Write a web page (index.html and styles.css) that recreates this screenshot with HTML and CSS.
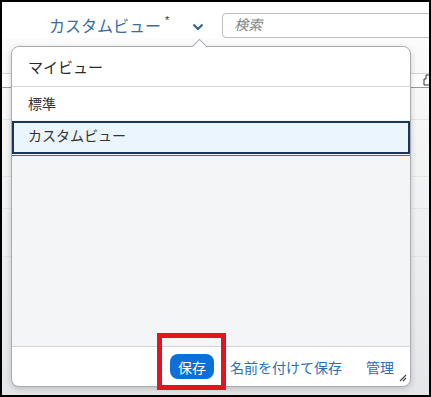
FILE: index.html
```html
<!DOCTYPE html>
<html>
<head>
  <title>カスタムビュー</title>
  <link rel="stylesheet" href="styles.css">
</head>
<body>

  <div class="frame">

    <div class="toolbar">
      <span class="view-title">カスタムビュー<sup>*</sup></span>
      <svg class="chevron" width="12" height="8" viewBox="0 0 12 8">
        <path d="M1.5 1.5 L6 6 L10.5 1.5" fill="none" stroke="#2f5d8c" stroke-width="2"/>
      </svg>
      <div class="search">検索</div>
    </div>

    <div class="content">
      <div class="content-tools">
        <svg class="tool-icon" width="10" height="12" viewBox="0 0 10 12">
          <path d="M1 5 H3 V1 H7 V5 H9 V11 H1 Z" fill="none" stroke="#333" stroke-width="1"/>
        </svg>
      </div>
      <div class="row row-a"></div>
      <div class="row row-b"></div>
      <div class="row row-c"></div>
      <div class="row row-d"></div>
    </div>

    <div class="popover">
      <div class="pop-header">マイビュー</div>
      <div class="pop-list">
        <div class="pop-item">標準</div>
        <div class="pop-item selected">カスタムビュー</div>
      </div>
      <div class="pop-footer">
        <button class="btn-save">保存</button>
        <span class="link">名前を付けて保存</span>
        <span class="link">管理</span>
      </div>
      <svg class="grip" width="8" height="8" viewBox="0 0 8 8">
        <path d="M1 7 L7 1 M4 7 L7 4" stroke="#444" stroke-width="1.1"/>
      </svg>
    </div>

    <div class="highlight"></div>

  </div>

</body>
</html>
```

FILE: styles.css
```css
body {
  margin: 0;
  font-family: "Liberation Sans", "Noto Sans CJK JP", sans-serif;
}
.frame {
  position: relative;
  box-sizing: border-box;
  width: 431px;
  height: 397px;
  border: 2px solid #000;
  background: #fff;
  overflow: hidden;
}

/* top bar */
.toolbar {
  display: flex;
  align-items: center;
  height: 25px;
  padding-top: 11px;
}
.view-title {
  margin-left: 47px;
  margin-top: 3px;
  font-size: 16px;
  line-height: 20px;
  color: #3a6c9c;
  white-space: nowrap;
}
.view-title sup {
  font-size: 11px;
  line-height: 0;
  vertical-align: baseline;
  position: relative;
  top: -8px;
  margin-left: 4px;
  color: #333;
}
.chevron {
  margin-left: 23px;
  margin-top: 2px;
}
.search {
  flex: 1;
  margin-left: 18px;
  margin-right: -20px;
  height: 25px;
  box-sizing: border-box;
  border: 1px solid #b9bcc0;
  border-radius: 4px;
  padding-left: 11px;
  line-height: 23px;
  font-size: 14px;
  font-style: italic;
  color: #858585;
}

/* page behind the popover */
.content {
  height: 357px;
  background: linear-gradient(#fbfbfb, #e4e6e8);
  padding-top: 35px;
  box-sizing: border-box;
}
.content-tools {
  height: 13px;
  border-top: 1px solid #d6d6d6;
  border-bottom: 1px solid #9a9a9a;
  background: #fff;
  display: flex;
  justify-content: flex-end;
}
.tool-icon {
  margin-right: -4px;
}
.row {
  border-bottom: 1px solid #e2e4e6;
}
.row-a { height: 31px; }
.row-b { height: 56px; }
.row-c { height: 31px; }
.row-d { height: 47px; }

/* views popover */
.popover {
  position: absolute;
  left: 9px;
  top: 44px;
  width: 400px;
  height: 341px;
  box-sizing: border-box;
  border: 1px solid #a8acb1;
  border-radius: 8px;
  background: #fff;
  box-shadow: 0 2px 6px rgba(0, 0, 0, 0.18);
  display: flex;
  flex-direction: column;
  font-family: "Noto Sans CJK JP", sans-serif;
}
.popover::before {
  content: "";
  position: absolute;
  top: -6px;
  left: 182px;
  width: 10px;
  height: 10px;
  background: #fff;
  border-left: 1px solid #a8acb1;
  border-top: 1px solid #a8acb1;
  transform: rotate(45deg);
}
.pop-header {
  position: relative;
  height: 39px;
  line-height: 39px;
  padding-left: 16px;
  font-size: 15px;
  color: #2b2b2b;
  border-bottom: 1px solid #d6d8db;
  border-radius: 8px 8px 0 0;
  background: #fff;
}
.pop-list {
  flex: 1;
  background: #f4f5f7;
}
.pop-item {
  height: 33px;
  line-height: 33px;
  padding-left: 16px;
  font-size: 14px;
  color: #333;
  background: #fff;
}
.pop-item.selected {
  height: 29px;
  line-height: 25px;
  margin-top: 1px;
  padding-left: 14px;
  border: 2px solid #17375c;
  background: #eaf5fd;
  box-shadow: 0 1px 0 #f4f5f7, 0 2px 0 #2f72b0;
}
.pop-footer {
  height: 39px;
  border-top: 1px solid #d2d4d7;
  display: flex;
  justify-content: flex-end;
  align-items: center;
  gap: 16px;
  padding-right: 16px;
  border-radius: 0 0 8px 8px;
}
.btn-save {
  height: 25px;
  padding: 0 8px;
  border: none;
  border-radius: 8px;
  background: #0e6fd7;
  color: #fff;
  font-family: "Noto Sans CJK JP", sans-serif;
  font-size: 14px;
}
.link {
  font-size: 14px;
  color: #2d6db5;
}
.link + .link {
  margin-left: 8px;
}
.grip {
  position: absolute;
  right: 3px;
  bottom: 4px;
}

/* annotation box */
.highlight {
  position: absolute;
  left: 155px;
  top: 331px;
  width: 69px;
  height: 57px;
  box-sizing: border-box;
  border: 5px solid #e2141f;
}
```
